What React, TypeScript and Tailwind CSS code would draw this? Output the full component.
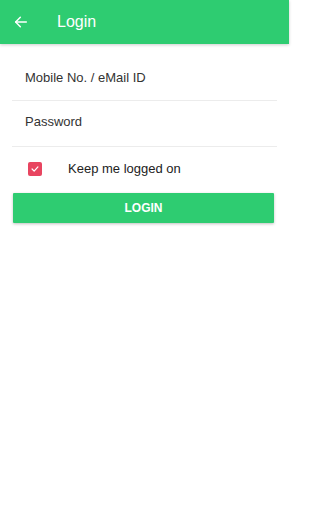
import React from 'react';

export default function App() {
  return (
    <div className="w-[289px] h-[512px] bg-white" style={{ fontFamily: '"Liberation Sans", Arial, sans-serif' }}>
      <div className="h-[44px] bg-[#2ecc71] flex items-center shadow-[0_1px_3px_rgba(0,0,0,0.2)]">
        <svg className="ml-[13px] w-[16px] h-[16px]" viewBox="0 0 24 24" fill="none" stroke="white" strokeWidth="2.2" strokeLinecap="round" strokeLinejoin="round">
          <path d="M20 12H4" />
          <path d="M11 5l-7 7 7 7" />
        </svg>
        <span className="ml-[28px] text-white text-[16px]">Login</span>
      </div>
      <div className="px-[12px]">
        <div className="h-[57px] flex items-center pl-[13px] pt-[11px] border-b border-[#ececec] text-[13px] text-[#333]">
          Mobile No. / eMail ID
        </div>
        <div className="h-[46px] flex items-center pl-[13px] pb-[4px] border-b border-[#ececec] text-[13px] text-[#333]">
          Password
        </div>
        <div className="h-[44px] flex items-center">
          <div className="ml-[16px] w-[14px] h-[14px] rounded-[2px] bg-[#e84560] flex items-center justify-center">
            <svg className="w-[10px] h-[10px]" viewBox="0 0 24 24" fill="none" stroke="white" strokeWidth="3" strokeLinecap="round" strokeLinejoin="round">
              <path d="M5 12l5 5 9-10" />
            </svg>
          </div>
          <span className="ml-[26px] text-[13px] text-[#222]">Keep me logged on</span>
        </div>
        <button className="mt-[2px] ml-[1px] w-[261px] h-[30px] bg-[#2ecc71] text-white text-[12px] font-bold shadow-[0_1px_3px_rgba(0,0,0,0.25)] rounded-[1px]">
          LOGIN
        </button>
      </div>
    </div>
  );
}
